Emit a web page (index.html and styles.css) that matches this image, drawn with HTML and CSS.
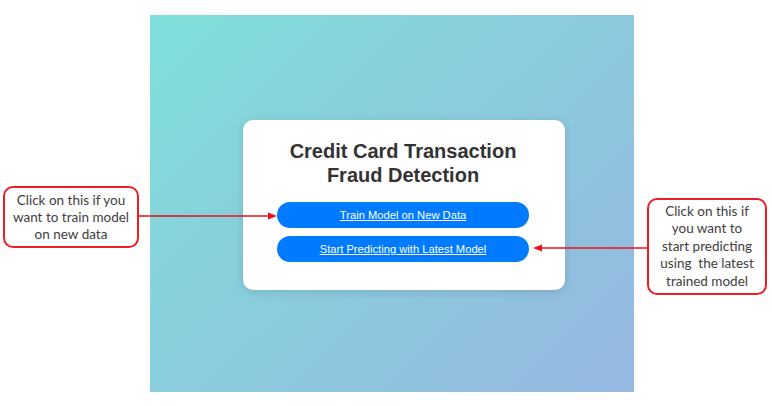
FILE: index.html
```html
<!DOCTYPE html>
<html lang="en">
<head>
<meta charset="utf-8">
<title>Credit Card Transaction Fraud Detection</title>
<link rel="stylesheet" href="styles.css">
</head>
<body>
<div class="stage">
  <div class="panel">
    <div class="card">
      <h1 class="title">Credit Card Transaction<br>Fraud Detection</h1>
      <div class="actions">
        <a class="btn" href="#">Train Model on New Data</a>
        <a class="btn" href="#">Start Predicting with Latest Model</a>
      </div>
    </div>
  </div>

  <svg class="arrows" width="772" height="406" viewBox="0 0 772 406" aria-hidden="true">
    <line x1="138" y1="216" x2="270" y2="216" stroke="#e8101a" stroke-width="1.5"/>
    <polygon points="277,216 268,212.5 268,219.5" fill="#e8101a"/>
    <line x1="647" y1="248" x2="540" y2="248" stroke="#e8101a" stroke-width="1.5"/>
    <polygon points="533,248 542,244.5 542,251.5" fill="#e8101a"/>
  </svg>

  <div class="callout callout-left">Click on this if you<br>want to train model<br>on new data</div>
  <div class="callout callout-right">Click on this if<br>you want to<br>start predicting<br>using&nbsp; the latest<br>trained model</div>
</div>
</body>
</html>
```

FILE: styles.css
```css
html, body {
  margin: 0;
  padding: 0;
  background: #ffffff;
}

.stage {
  position: relative;
  width: 772px;
  height: 406px;
  overflow: hidden;
  display: flex;
  align-items: flex-start;
}

.panel {
  margin-left: 150px;
  margin-top: 15px;
  width: 484px;
  height: 377px;
  background: linear-gradient(135deg, #7fdfd9 0%, #8bcbdd 50%, #96b7e1 100%);
  display: flex;
  align-items: flex-start;
}

.card {
  margin-left: 93px;
  margin-top: 105px;
  width: 322px;
  height: 170px;
  box-sizing: border-box;
  padding: 19px 36px 0 34px;
  background: #ffffff;
  border-radius: 10px;
  box-shadow: 0 2px 10px rgba(0, 0, 0, 0.12);
  display: flex;
  flex-direction: column;
  align-items: stretch;
}

.title {
  margin: 0;
  font-family: "Liberation Sans", Arial, sans-serif;
  font-weight: bold;
  font-size: 20px;
  line-height: 24px;
  color: #333333;
  text-align: center;
}

.actions {
  margin-top: 15px;
  display: flex;
  flex-direction: column;
  gap: 8px;
}

.btn {
  display: flex;
  align-items: center;
  justify-content: center;
  height: 26px;
  border-radius: 13px;
  background: #007bff;
  color: #ffffff;
  font-family: "Liberation Sans", Arial, sans-serif;
  font-size: 11.2px;
  text-decoration: underline;
}

.arrows {
  position: absolute;
  left: 0;
  top: 0;
}

.callout {
  position: absolute;
  box-sizing: border-box;
  border: 2px solid #ee1c25;
  border-radius: 10px;
  background: #ffffff;
  color: #404040;
  font-family: Lato, "Open Sans", sans-serif;
  font-size: 13.5px;
  line-height: 17px;
  text-align: center;
  display: flex;
  align-items: center;
  justify-content: center;
}

.callout-left {
  left: 3px;
  top: 186px;
  width: 136px;
  height: 62px;
}

.callout-right {
  left: 647px;
  top: 198px;
  width: 120px;
  height: 97px;
  line-height: 17.5px;
}
```
